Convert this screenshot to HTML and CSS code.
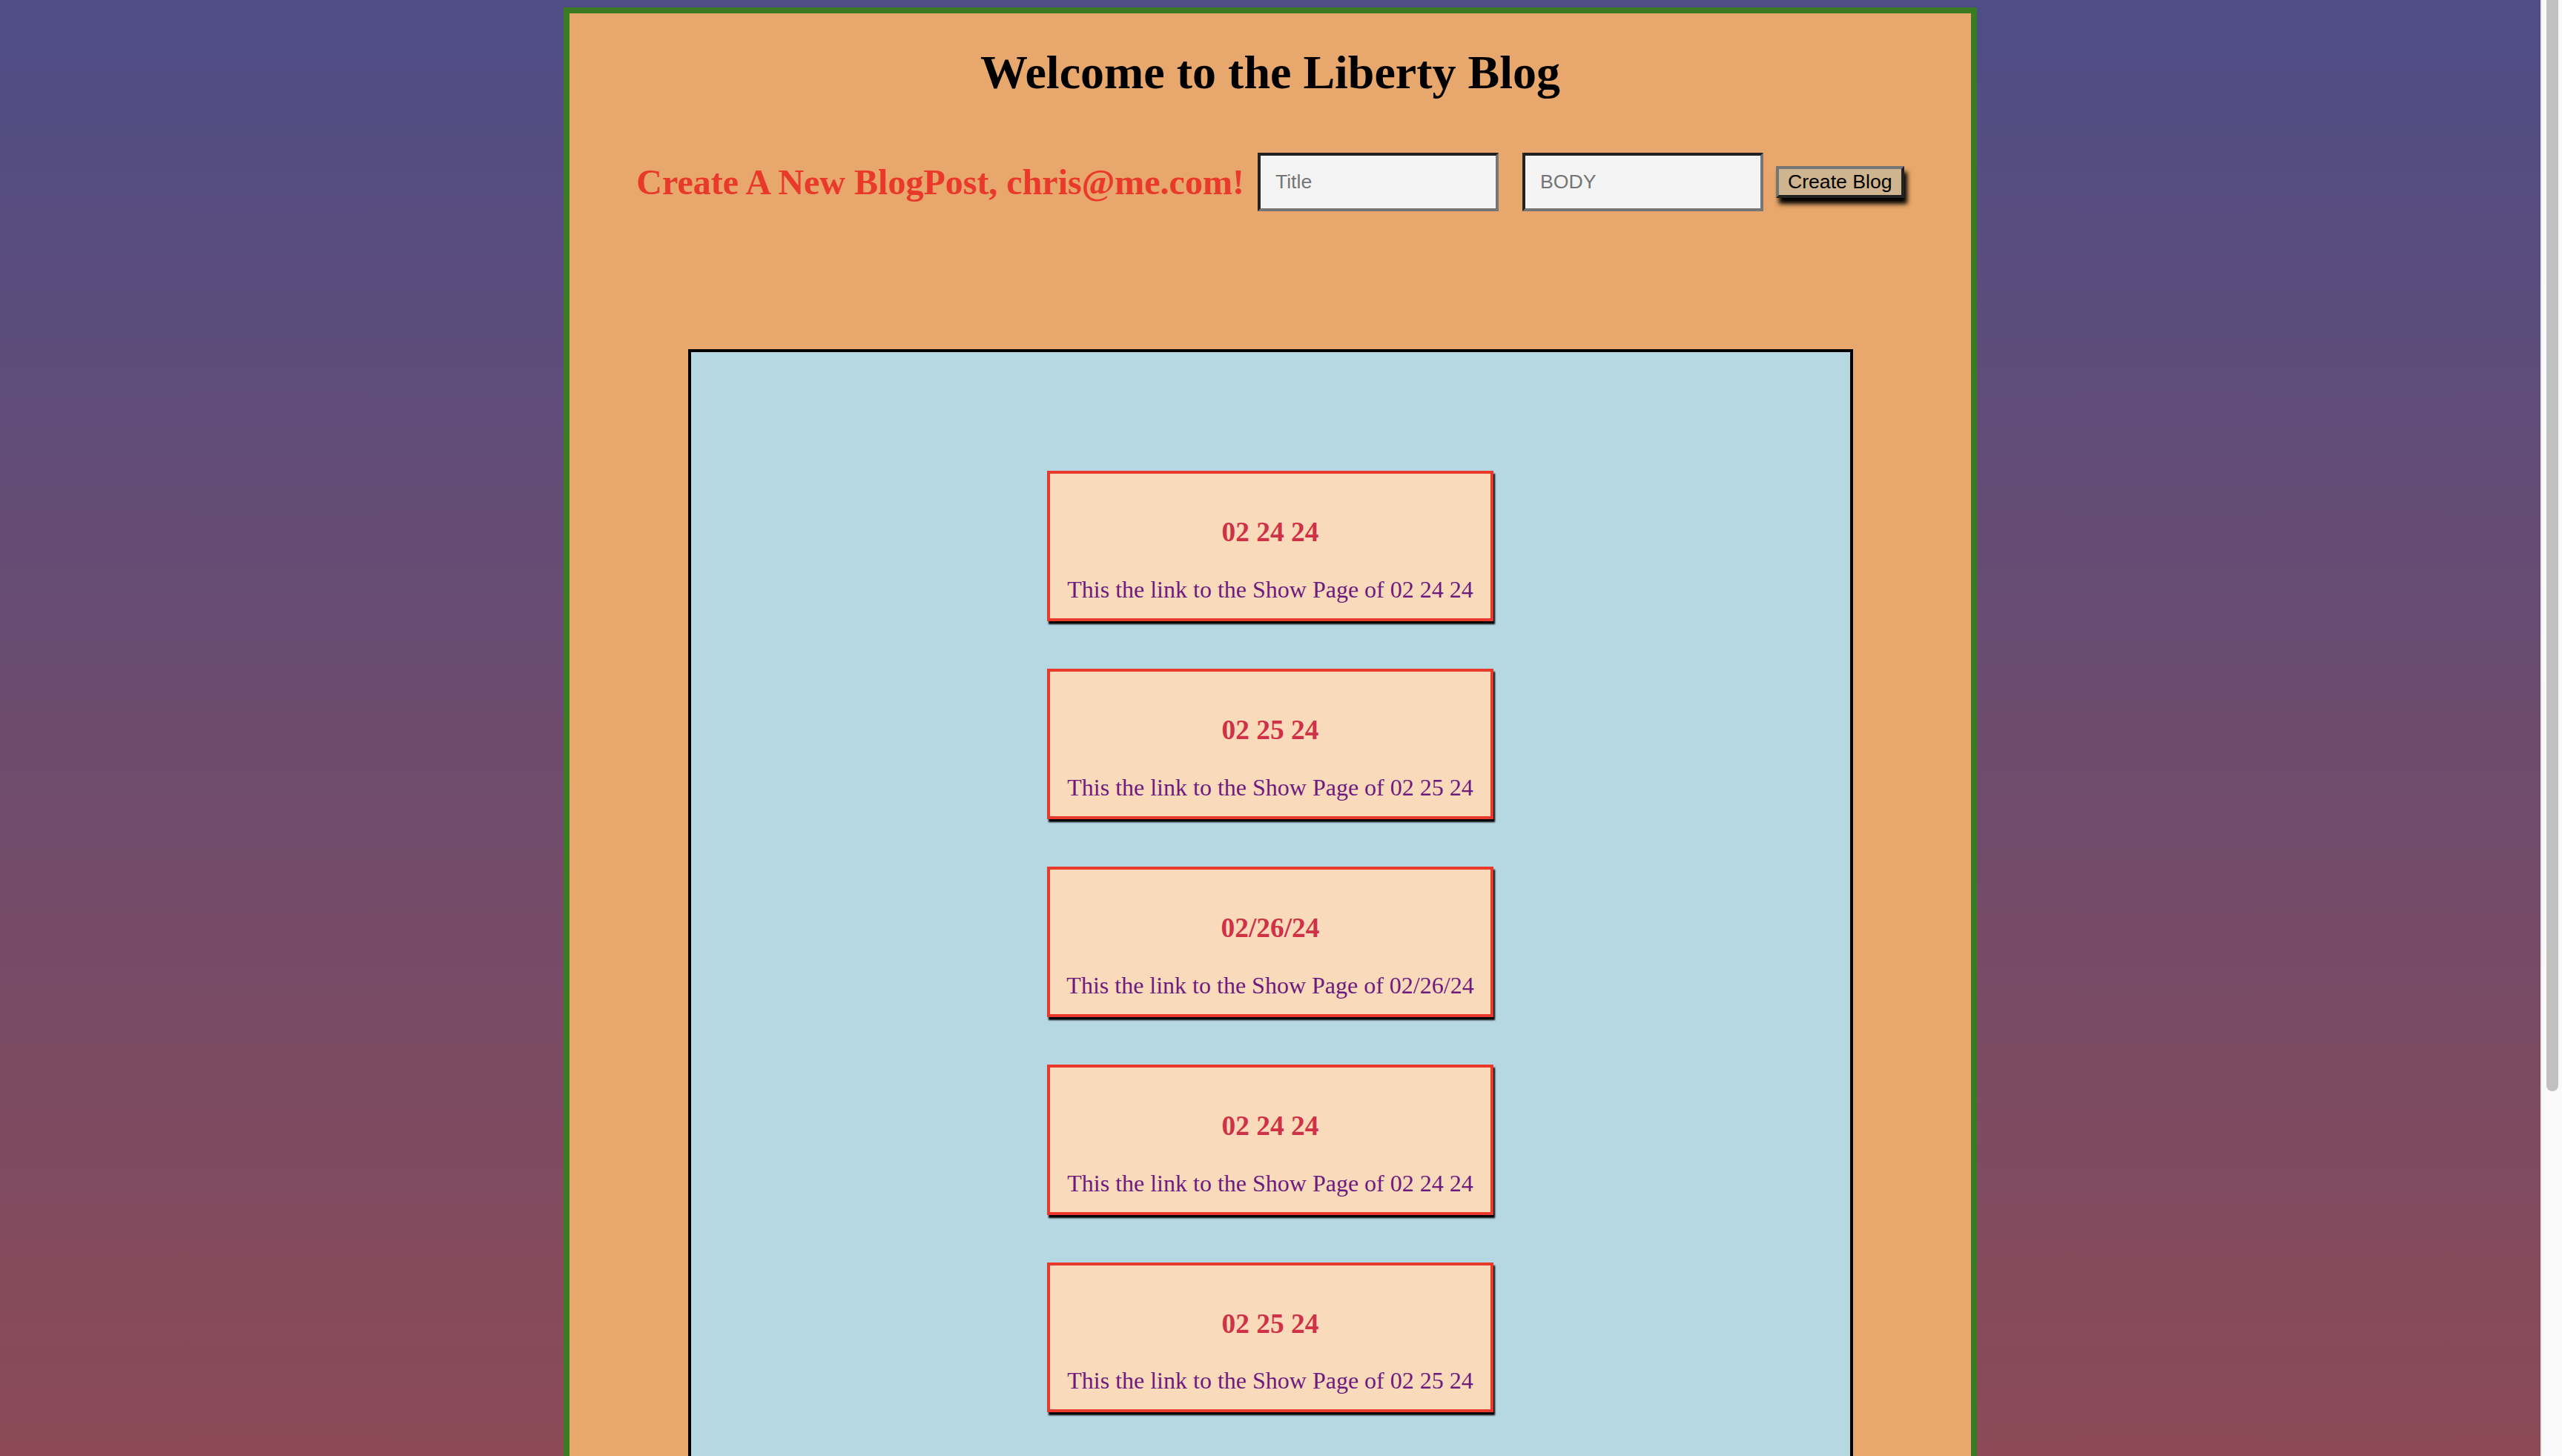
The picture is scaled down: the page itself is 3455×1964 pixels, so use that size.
FILE: index.html
```html
<!DOCTYPE html>
<html lang="en">
<head>
<meta charset="utf-8">
<title>Liberty Blog</title>
<link rel="stylesheet" href="styles.css">
</head>
<body>
<div class="page">
  <main class="blog">
    <h1 class="blog-title">Welcome to the Liberty Blog</h1>
    <form class="create-row">
      <h2 class="create-heading">Create A New BlogPost, chris@me.com!</h2>
      <input class="field field-title" type="text" placeholder="Title">
      <input class="field field-body" type="text" placeholder="BODY">
      <button class="create-btn" type="button">Create Blog</button>
    </form>
    <section class="posts">
      <div class="post"><h3>02 24 24</h3><a href="#">This the link to the Show Page of 02 24 24</a></div>
      <div class="post"><h3>02 25 24</h3><a href="#">This the link to the Show Page of 02 25 24</a></div>
      <div class="post"><h3>02/26/24</h3><a href="#">This the link to the Show Page of 02/26/24</a></div>
      <div class="post"><h3>02 24 24</h3><a href="#">This the link to the Show Page of 02 24 24</a></div>
      <div class="post"><h3>02 25 24</h3><a href="#">This the link to the Show Page of 02 25 24</a></div>
    </section>
  </main>
</div>
<div class="scrollbar"><div class="scroll-thumb"></div></div>
</body>
</html>
```
FILE: styles.css
```css
html {
  height: 100%;
  overflow: hidden;
  background: linear-gradient(to bottom, #4e4d86, #8c4a56);
}

body {
  margin: 0;
  height: 100%;
  font-family: "Liberation Serif", "Times New Roman", serif;
}

.page {
  margin-right: 29px;
  padding-top: 10px;
}

.blog {
  width: 1890px;
  margin: 0 auto;
  border: 8px solid #3a7a22;
  background: #e8a76c;
  min-height: 2600px;
}

.blog-title {
  margin: 43px 0;
  font-size: 64px;
  line-height: normal;
  text-align: center;
  color: #000;
}

.create-row {
  display: flex;
  justify-content: center;
  align-items: center;
  margin: 0;
}

.create-heading {
  margin: 40px 18px 40px 0;
  font-size: 48px;
  line-height: normal;
  color: #e9392a;
  white-space: nowrap;
}

.field {
  box-sizing: border-box;
  width: 325px;
  margin: 0;
  padding: 20px;
  font: 26.67px "Liberation Sans", Arial, sans-serif;
  color: #000;
  background: #f4f4f4;
  border: 4px solid;
  border-color: #222 #767676 #767676 #222;
  flex-shrink: 0;
}

.field::placeholder {
  color: #757575;
}

.field-title {
  margin-right: 32px;
}

.field-body {
  margin-right: 17px;
}

.create-btn {
  margin: 0;
  padding: 2px 12px;
  font: 26.67px "Liberation Sans", Arial, sans-serif;
  color: #000;
  background: #cfb490;
  border: 4px solid;
  border-color: #767676 #222 #222 #767676;
  box-shadow: 4px 8px 6px #000;
  flex-shrink: 0;
}

.posts {
  width: 1563px;
  margin: 158px auto 0;
  padding: 160px 0;
  border: 4px solid #000;
  background: #b6d8e3;
  display: flex;
  flex-direction: column;
  align-items: center;
  gap: 64px;
}

.post {
  width: 594px;
  padding: 20px 0;
  border: 4px solid #e8392a;
  background: #f9dbbc;
  text-align: center;
  box-shadow: 2px 4px 2px #000;
}

.post h3 {
  margin: 37.44px 0;
  font-size: 37.44px;
  line-height: normal;
  color: #cf3246;
}

.post a {
  font-size: 32px;
  color: #6f1a7f;
  text-decoration: none;
}

.scrollbar {
  position: fixed;
  top: 0;
  right: 0;
  width: 29px;
  height: 100%;
  box-sizing: border-box;
  background: #f9f9f9;
  border-left: 2px solid #e8e8e8;
}

.scroll-thumb {
  margin: 0 5px 0 6px;
  height: 1472px;
  background: #c1c1c1;
  border-radius: 0 0 8px 8px;
}
```
